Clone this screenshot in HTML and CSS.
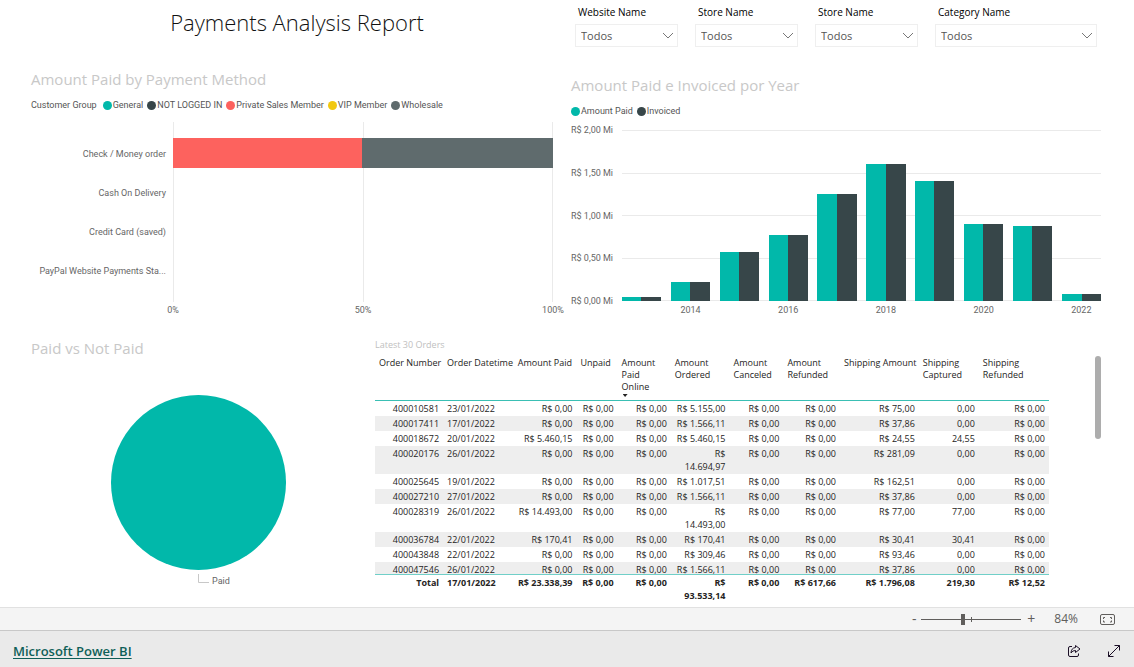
FILE: index.html
```html
<!DOCTYPE html>
<html lang="pt-BR">
<head>
<meta charset="utf-8">
<title>Payments Analysis Report</title>
<meta name="viewport" content="width=device-width, initial-scale=1">
<link rel="stylesheet" href="styles.css">
</head>
<body>
<main class="report">
  <div class="row row-top">
    <section class="panel panel-method">
      <h1 class="report-title">Payments Analysis Report</h1>
      <h2 class="visual-title">Amount Paid by Payment Method</h2>
      <ul class="legend">
        <li class="legend-caption">Customer Group</li>
        <li><i class="dot teal"></i>General</li>
        <li><i class="dot dark"></i>NOT LOGGED IN</li>
        <li><i class="dot red"></i>Private Sales Member</li>
        <li><i class="dot yellow"></i>VIP Member</li>
        <li><i class="dot slate"></i>Wholesale</li>
      </ul>
      <div class="hchart">
        <div class="hchart-labels">
          <span>Check / Money order</span>
          <span>Cash On Delivery</span>
          <span>Credit Card (saved)</span>
          <span>PayPal Website Payments Sta...</span>
        </div>
        <div class="hchart-grid"><i></i><i></i><i></i></div>
        <div class="hchart-bars">
          <div class="hbar"><span class="red" style="width:49.7%"></span><span class="slate" style="width:50.3%"></span></div>
        </div>
        <div class="hchart-axis"><span>0%</span><span>50%</span><span>100%</span></div>
      </div>
    </section>

    <section class="panel panel-year">
      <form class="slicers">
        <div class="slicer">
          <label for="website">Website Name</label>
          <div class="select-box"><select id="website"><option>Todos</option></select><svg viewBox="0 0 12 7"><path d="M1 1 L6 6 L11 1"/></svg></div>
        </div>
        <div class="slicer">
          <label for="store">Store Name</label>
          <div class="select-box"><select id="store"><option>Todos</option></select><svg viewBox="0 0 12 7"><path d="M1 1 L6 6 L11 1"/></svg></div>
        </div>
        <div class="slicer">
          <label for="store-view">Store Name</label>
          <div class="select-box"><select id="store-view"><option>Todos</option></select><svg viewBox="0 0 12 7"><path d="M1 1 L6 6 L11 1"/></svg></div>
        </div>
        <div class="slicer">
          <label for="category">Category Name</label>
          <div class="select-box"><select id="category"><option>Todos</option></select><svg viewBox="0 0 12 7"><path d="M1 1 L6 6 L11 1"/></svg></div>
        </div>
      </form>
      <h2 class="visual-title">Amount Paid e Invoiced por Year</h2>
      <ul class="legend">
        <li><i class="dot teal"></i>Amount Paid</li>
        <li><i class="dot dark"></i>Invoiced</li>
      </ul>
      <div class="vchart">
        <div class="vchart-labels"><span>R$ 2,00 Mi</span><span>R$ 1,50 Mi</span><span>R$ 1,00 Mi</span><span>R$ 0,50 Mi</span><span>R$ 0,00 Mi</span></div>
        <div class="vchart-grid"><i></i><i></i><i></i><i></i><i></i></div>
        <div class="vchart-bars">
          <div class="pair" style="height:2.3%"></div>
          <div class="pair" style="height:11.4%"></div>
          <div class="pair" style="height:28.4%"></div>
          <div class="pair" style="height:38.6%"></div>
          <div class="pair" style="height:62.4%"></div>
          <div class="pair" style="height:80.4%"></div>
          <div class="pair" style="height:70%"></div>
          <div class="pair" style="height:45%"></div>
          <div class="pair" style="height:44%"></div>
          <div class="pair" style="height:4.2%"></div>
        </div>
        <div class="vchart-axis"><span></span><span>2014</span><span></span><span>2016</span><span></span><span>2018</span><span></span><span>2020</span><span></span><span>2022</span></div>
      </div>
    </section>
  </div>

  <div class="row row-bottom">
    <section class="panel panel-pie">
      <h2 class="visual-title">Paid vs Not Paid</h2>
      <div class="pie teal"></div>
      <div class="pie-callout">
        <svg width="11" height="10" viewBox="0 0 11 10"><path d="M.5 0V8.500H11"/></svg><span>Paid</span>
      </div>
    </section>

    <section class="panel panel-orders">
      <h2 class="orders-title">Latest 30 Orders</h2>
      <div class="orders-body">
        <div class="orders-view">
          <table class="orders">
            <colgroup>
              <col style="width:10.1%"><col style="width:10.5%"><col style="width:9.3%"><col style="width:6.1%"><col style="width:7.9%"><col style="width:8.7%"><col style="width:8%"><col style="width:8.4%"><col style="width:11.7%"><col style="width:8.9%"><col style="width:10.4%">
            </colgroup>
            <thead>
              <tr><th>Order Number</th><th>Order Datetime</th><th>Amount Paid</th><th>Unpaid</th><th>Amount<br>Paid<br>Online<i class="sort"></i></th><th>Amount<br>Ordered</th><th>Amount<br>Canceled</th><th>Amount<br>Refunded</th><th>Shipping Amount</th><th>Shipping<br>Captured</th><th>Shipping<br>Refunded</th></tr>
            </thead>
            <tbody>
              <tr><td>400010581</td><td>23/01/2022</td><td>R$ 0,00</td><td>R$ 0,00</td><td>R$ 0,00</td><td>R$ 5.155,00</td><td>R$ 0,00</td><td>R$ 0,00</td><td>R$ 75,00</td><td>0,00</td><td>R$ 0,00</td></tr>
              <tr><td>400017411</td><td>17/01/2022</td><td>R$ 0,00</td><td>R$ 0,00</td><td>R$ 0,00</td><td>R$ 1.566,11</td><td>R$ 0,00</td><td>R$ 0,00</td><td>R$ 37,86</td><td>0,00</td><td>R$ 0,00</td></tr>
              <tr><td>400018672</td><td>20/01/2022</td><td>R$ 5.460,15</td><td>R$ 0,00</td><td>R$ 0,00</td><td>R$ 5.460,15</td><td>R$ 0,00</td><td>R$ 0,00</td><td>R$ 24,55</td><td>24,55</td><td>R$ 0,00</td></tr>
              <tr><td>400020176</td><td>26/01/2022</td><td>R$ 0,00</td><td>R$ 0,00</td><td>R$ 0,00</td><td>R$<br>14.694,97</td><td>R$ 0,00</td><td>R$ 0,00</td><td>R$ 281,09</td><td>0,00</td><td>R$ 0,00</td></tr>
              <tr><td>400025645</td><td>19/01/2022</td><td>R$ 0,00</td><td>R$ 0,00</td><td>R$ 0,00</td><td>R$ 1.017,51</td><td>R$ 0,00</td><td>R$ 0,00</td><td>R$ 162,51</td><td>0,00</td><td>R$ 0,00</td></tr>
              <tr><td>400027210</td><td>27/01/2022</td><td>R$ 0,00</td><td>R$ 0,00</td><td>R$ 0,00</td><td>R$ 1.566,11</td><td>R$ 0,00</td><td>R$ 0,00</td><td>R$ 37,86</td><td>0,00</td><td>R$ 0,00</td></tr>
              <tr><td>400028319</td><td>26/01/2022</td><td>R$ 14.493,00</td><td>R$ 0,00</td><td>R$ 0,00</td><td>R$<br>14.493,00</td><td>R$ 0,00</td><td>R$ 0,00</td><td>R$ 77,00</td><td>77,00</td><td>R$ 0,00</td></tr>
              <tr><td>400036784</td><td>22/01/2022</td><td>R$ 170,41</td><td>R$ 0,00</td><td>R$ 0,00</td><td>R$ 170,41</td><td>R$ 0,00</td><td>R$ 0,00</td><td>R$ 30,41</td><td>30,41</td><td>R$ 0,00</td></tr>
              <tr><td>400043848</td><td>22/01/2022</td><td>R$ 0,00</td><td>R$ 0,00</td><td>R$ 0,00</td><td>R$ 309,46</td><td>R$ 0,00</td><td>R$ 0,00</td><td>R$ 93,46</td><td>0,00</td><td>R$ 0,00</td></tr>
              <tr><td>400047546</td><td>26/01/2022</td><td>R$ 0,00</td><td>R$ 0,00</td><td>R$ 0,00</td><td>R$ 1.566,11</td><td>R$ 0,00</td><td>R$ 0,00</td><td>R$ 37,86</td><td>0,00</td><td>R$ 0,00</td></tr>
            </tbody>
            <tfoot>
              <tr><td>Total</td><td>17/01/2022</td><td>R$ 23.338,39</td><td>R$ 0,00</td><td>R$ 0,00</td><td>R$<br>93.533,14</td><td>R$ 0,00</td><td>R$ 617,66</td><td>R$ 1.796,08</td><td>219,30</td><td>R$ 12,52</td></tr>
            </tfoot>
          </table>
        </div>
        <div class="scroll-thumb"></div>
      </div>
    </section>
  </div>
</main>

<div class="zoombar">
  <button type="button" class="zoom-step" aria-label="Zoom out">-</button>
  <input class="zoom-range" type="range" min="0" max="100" value="41" aria-label="Zoom">
  <button type="button" class="zoom-step" aria-label="Zoom in">+</button>
  <span class="zoom-value">84%</span>
  <button type="button" class="icon-button" aria-label="Fit to page">
    <svg width="15" height="11" viewBox="0 0 15 11"><rect x=".5" y=".5" width="14" height="10" rx="1.500"/><path d="M3.500 5V3.500H5M10 3.500h1.500V5M3.500 6.500V8H5M10 8h1.500V6.500"/></svg>
  </button>
</div>

<footer class="footer">
  <a href="#">Microsoft Power BI</a>
  <div class="footer-actions">
    <button type="button" class="icon-button" aria-label="Share">
      <svg width="14" height="14" viewBox="0 0 14 14"><path d="M5 2.500H3Q1.500 2.500 1.500 4v7Q1.500 12.500 3 12.500h7Q11.500 12.500 11.500 11V9.500"/><path d="M8.500 1.500 13 5 8.500 8.500v-2Q5.500 6.300 4 9q.2-5 4.500-5.500z"/></svg>
    </button>
    <button type="button" class="icon-button" aria-label="Full screen">
      <svg width="14" height="14" viewBox="0 0 14 14"><path d="M1.500 12.500l11-11M7.500 1.500h5v5M1.500 7.500v5h5"/></svg>
    </button>
  </div>
</footer>
</body>
</html>
```

FILE: styles.css
```css
* { box-sizing: border-box; }

body {
  margin: 0;
  height: 100vh;
  display: flex;
  flex-direction: column;
  background: #fff;
  color: #252423;
  font-family: "Open Sans", "Noto Sans", sans-serif;
  font-size: 9px;
  line-height: 12px;
}

h1, h2, ul { margin: 0; padding: 0; font-weight: 400; }
button { padding: 0; border: 0; background: none; font: inherit; color: inherit; }

.teal { background: #01b8aa; }
.dark { background: #374649; }
.red { background: #fd625e; }
.yellow { background: #f2c80f; }
.slate { background: #5f6b6d; }

.report { flex: 1; min-height: 0; display: flex; flex-direction: column; }
.row { display: grid; }
.row-top { grid-template-columns: 1fr 1fr; }
.row-bottom { flex: 1; min-height: 0; margin-top: 15px; padding-bottom: 4px; grid-template-columns: 367fr 767fr; grid-template-rows: minmax(0, 1fr); }
.panel { min-width: 0; }

.report-title { margin-top: 8px; text-align: center; font-size: 22px; font-weight: 300; line-height: 28px; color: #111; }
.visual-title { color: #c8c8c8; font-size: 15px; line-height: 20px; white-space: nowrap; }

.legend, .hchart, .vchart, .pie-callout { font-family: Roboto, "Open Sans", sans-serif; }
.legend { display: flex; gap: 4px; list-style: none; color: #555; white-space: nowrap; }
.legend li { display: flex; align-items: center; gap: 1px; }
.legend-caption { margin-right: 2px; }
.dot { width: 9px; height: 9px; border-radius: 50%; }

/* Payment method: 100% stacked bars */
.panel-method { padding: 0 4px 0 31px; }
.panel-method .visual-title { margin-top: 33px; }
.panel-method .legend { margin-top: 10px; }
.hchart { display: grid; grid-template-columns: 142px 1fr; grid-template-rows: 180px 12px; row-gap: 2px; margin: 11px 10px 0 0; color: #666; }
.hchart-labels { grid-area: 1 / 1; display: flex; flex-direction: column; padding: 12px 7px 12px 0; text-align: right; white-space: nowrap; }
.hchart-labels span { flex: 1; display: flex; align-items: center; justify-content: flex-end; }
.hchart-grid { grid-area: 1 / 2; display: flex; justify-content: space-between; }
.hchart-grid i { width: 1px; background: #eaeaea; }
.hchart-bars { grid-area: 1 / 2; padding-top: 16px; }
.hbar { display: flex; height: 30px; }
.hchart-axis { grid-area: 2 / 2; display: flex; justify-content: space-between; }
.hchart-axis span { width: 0; display: flex; justify-content: center; }

/* Slicers and yearly columns */
.panel-year { padding: 6px 33px 0 4px; }
.slicers { display: grid; grid-template-columns: 103fr 103fr 103fr 162fr; gap: 17px; padding: 0 4px; color: #000; }
.slicer label { display: block; padding-left: 3px; font-size: 10px; }
.select-box { position: relative; margin-top: 6px; }
.select-box select { display: block; width: 100%; height: 23px; padding: 0 20px 0 5px; appearance: none; border: 1px solid #efefef; border-radius: 0; background: #fff; color: #555; font: 11px/20px "Open Sans", "Noto Sans", sans-serif; }
.select-box svg { position: absolute; right: 4px; top: 8px; width: 12px; height: 7px; fill: none; stroke: #777; pointer-events: none; }
.panel-year .visual-title { margin-top: 28px; }
.panel-year .legend { margin-top: 10px; }
.vchart { display: grid; grid-template-columns: 51px 1fr; grid-template-rows: 171px 12px; row-gap: 3px; margin-top: 13px; color: #666; }
.vchart-labels { grid-area: 1 / 1; display: flex; flex-direction: column; justify-content: space-between; white-space: nowrap; }
.vchart-labels span { height: 0; display: flex; align-items: center; }
.vchart-grid { grid-area: 1 / 2; display: flex; flex-direction: column; justify-content: space-between; }
.vchart-grid i { height: 1px; background: #eaeaea; }
.vchart-bars { grid-area: 1 / 2; display: flex; align-items: flex-end; justify-content: space-between; }
.pair { width: 8.2%; background: linear-gradient(90deg, #01b8aa 50%, #374649 50%); }
.vchart-axis { grid-area: 2 / 2; display: flex; justify-content: space-between; }
.vchart-axis span { width: 8.2%; text-align: center; }

/* Pie */
.panel-pie { display: flex; flex-direction: column; padding: 7px 2px 0 31px; }
.pie { width: 175px; height: 175px; margin: 37px auto 0; border-radius: 50%; }
.pie-callout { display: flex; align-items: center; gap: 3px; margin: 4px 0 0 167px; color: #666; }
.pie-callout svg { margin-bottom: 4px; fill: none; stroke: #c8c8c8; }

/* Orders */
.panel-orders { display: flex; flex-direction: column; min-height: 0; padding: 8px 33px 0 8px; }
.orders-title { color: #c0c0c0; font-size: 9px; line-height: 12px; }
.orders-body { flex: 1; min-height: 0; display: flex; gap: 46px; margin-top: 5px; }
.orders-view { flex: 1; min-width: 0; overflow-y: auto; scrollbar-width: none; }
.scroll-thumb { width: 6px; height: 83px; border-radius: 3px; background: #adadad; }
.orders { width: 100%; table-layout: fixed; border-collapse: separate; border-spacing: 0; line-height: 13px; white-space: nowrap; }
.orders th, .orders td { padding: 1px 4px; vertical-align: top; text-align: right; }
.orders th { position: sticky; top: 0; height: 45px; border-bottom: 1px solid #3abfb4; background: #fff; font-weight: 400; line-height: 12px; text-align: left; }
.orders td:nth-child(2) { text-align: left; }
.orders tbody tr:nth-child(even) { background: #eee; }
.orders tfoot td { position: sticky; bottom: 0; border-top: 1px solid #70cfc8; background: #fff; font-weight: 700; }
.sort { display: block; width: 5px; height: 3px; margin: 1px; background: #252423; clip-path: polygon(0 0, 100% 0, 50% 100%); }

/* Zoom controls */
.zoombar { display: flex; align-items: center; justify-content: flex-end; height: 23px; padding-right: 19px; border-top: 1px solid #e1e1e1; background: #f4f4f4; color: #605e5c; font-size: 12px; }
.zoom-step { width: 8px; font-size: 14px; line-height: 20px; }
.zoom-range { width: 100px; height: 12px; margin: 0 6px 0 3px; appearance: none; background: linear-gradient(#605e5c, #605e5c) 50px 50% / 1px 5px no-repeat, linear-gradient(#605e5c, #605e5c) 0 50% / 100% 1px no-repeat; }
.zoom-range::-webkit-slider-thumb { appearance: none; width: 4px; height: 11px; background: #605e5c; }
.zoom-value { margin: 0 22px 0 19px; }
.icon-button { display: flex; }
.icon-button svg { fill: none; stroke: #605e5c; }

.footer { display: flex; align-items: center; justify-content: space-between; height: 37px; padding: 3px 13px 0; border-top: 1px solid #c8c8c8; background: #eaeaea; }
.footer a { color: #0f5f58; font-size: 13px; font-weight: 600; line-height: 18px; text-underline-offset: 2px; }
.footer-actions { display: flex; gap: 26px; }
.footer-actions svg { stroke: #1b0f26; }
```
